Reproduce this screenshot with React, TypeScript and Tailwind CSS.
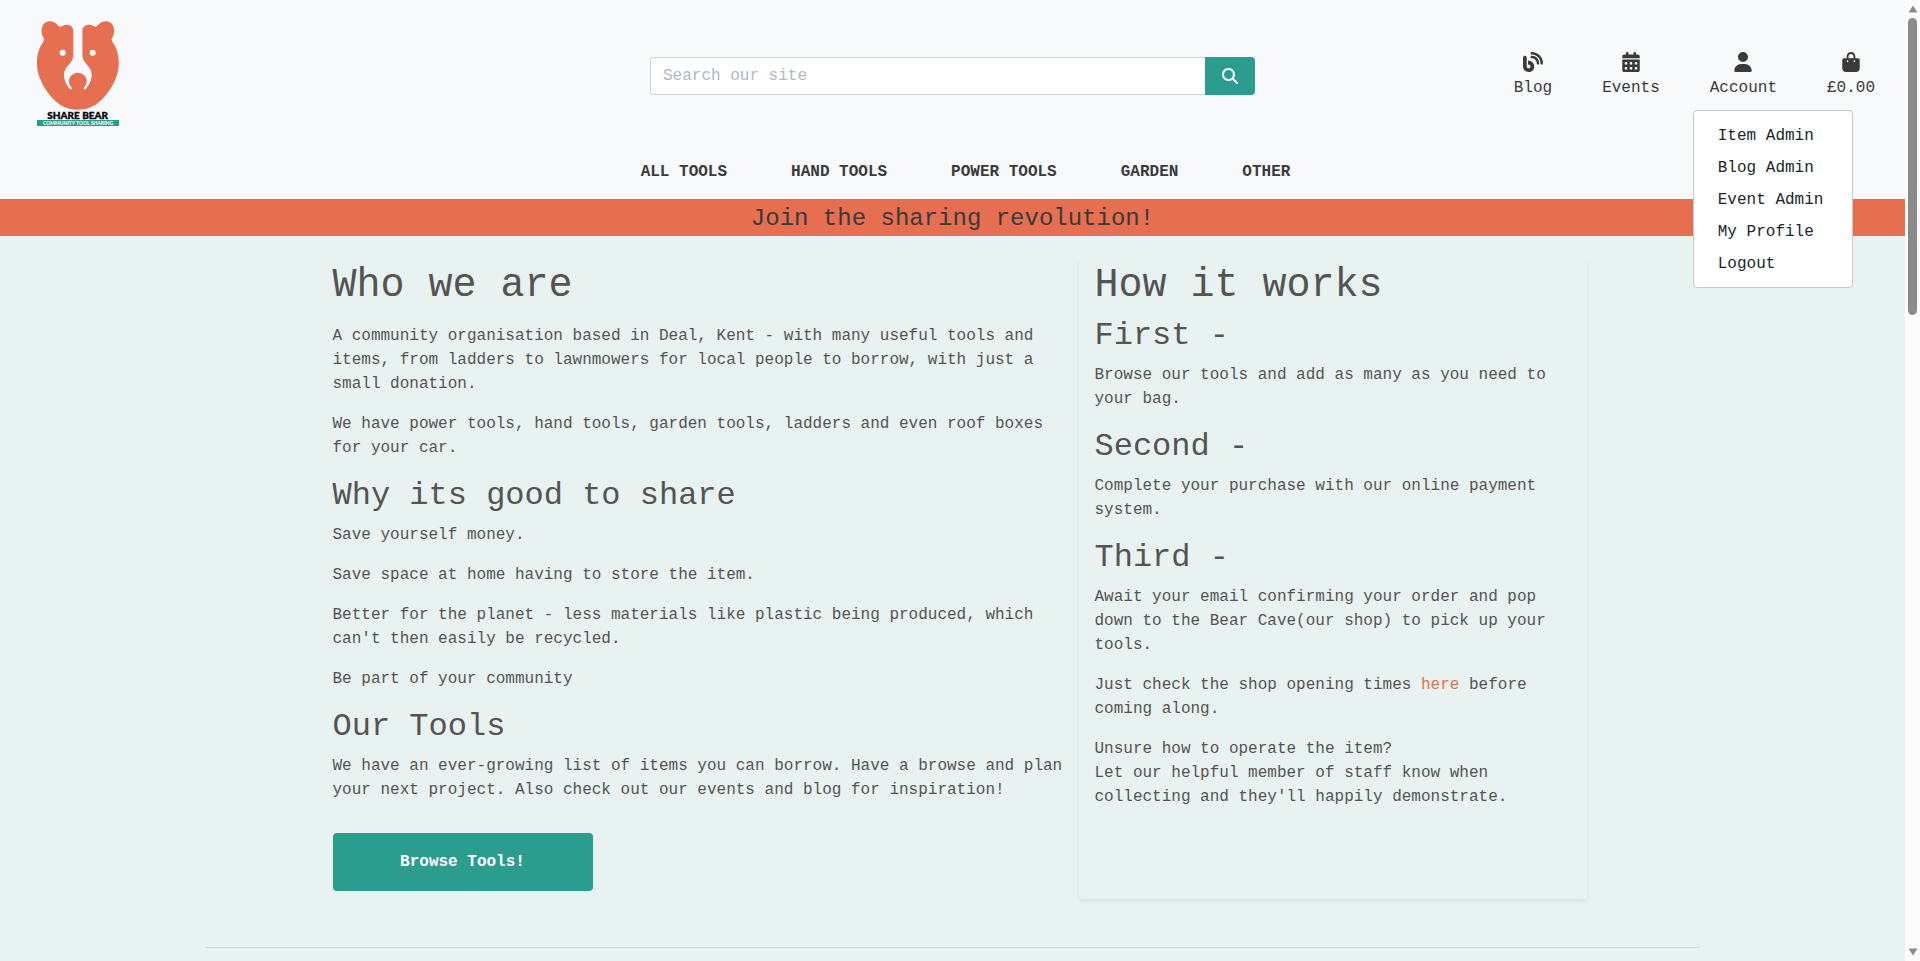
import type { ReactNode } from "react";
import {
  FaBagShopping,
  FaBlog,
  FaCalendarDays,
  FaMagnifyingGlass,
  FaUser,
} from "react-icons/fa6";

const categories = ["ALL TOOLS", "HAND TOOLS", "POWER TOOLS", "GARDEN", "OTHER"];
const accountLinks = ["Item Admin", "Blog Admin", "Event Admin", "My Profile", "Logout"];

function Logo() {
  return (
    <svg viewBox="50 30 246 318" className="h-[106px] w-[82px]" role="img" aria-label="Share Bear">
      <path
        fill="#e76f51"
        d="M159 64V134C159 162 131 166 131 194C131 212 140 226 148 236C151 239 156 238 155 234C150 228 146 222 146 212C146 199 159 188 172.500 188C186 188 199 199 199 212C199 222 195 228 190 234C189 238 194 239 197 236C205 226 214 212 214 194C214 166 186 162 186 134V64C186 46 203 40 219 48C225 52 229 50 233 45C243 32 261 30 272 39C284 50 284 72 275 84C272 89 276 94 279 100C300 130 300 178 284 210C271 242 249 268 226 284C208 295 190 299 172.500 299C155 299 137 295 119 284C96 268 74 242 61 210C45 178 45 130 66 100C69 94 73 89 70 84C61 72 61 50 73 39C84 30 102 32 112 45C116 50 120 52 126 48C142 40 159 46 159 64Z"
      />
      <circle cx="127" cy="128" r="9" fill="#ffffff" />
      <circle cx="217" cy="128" r="9" fill="#ffffff" />
      <text
        x="172"
        y="327"
        textAnchor="middle"
        fill="#000000"
        stroke="#000000"
        strokeWidth="1"
        className="font-['Lato',sans-serif] text-[30px] font-black"
      >
        SHARE BEAR
      </text>
      <rect x="50" y="330" width="246" height="18" fill="#2a9d8f" />
      <text
        x="173"
        y="344"
        textAnchor="middle"
        fill="#ffffff"
        className="font-['Lato',sans-serif] text-[15px] font-black"
      >
        COMMUNITY TOOL SHARING
      </text>
    </svg>
  );
}

function IconLink({ icon, label }: { icon: ReactNode; label: string }) {
  return (
    <a href="#" className="flex flex-col items-center gap-1">
      <span className="text-[20px]">{icon}</span>
      <span>{label}</span>
    </a>
  );
}

function Header() {
  return (
    <header className="bg-[#f8f9fb] pt-5 pb-[15px] text-[#3a3a3a]">
      <div className="grid grid-cols-3 items-center">
        <a href="#" className="ml-[37px] w-fit pb-1.5">
          <Logo />
        </a>
        <form className="mx-[15px] flex h-[38px]" onSubmit={(e) => e.preventDefault()}>
          <input
            type="text"
            aria-label="Search our site"
            placeholder="Search our site"
            className="min-w-0 flex-1 rounded-l border border-r-0 border-[#ced4d6] bg-white px-3 outline-none placeholder:text-[#adb9c4]"
          />
          <button
            type="submit"
            aria-label="Search"
            className="flex w-[50px] items-center justify-center rounded-r bg-[#2a9d8f] text-white"
          >
            <FaMagnifyingGlass />
          </button>
        </form>
        <div className="flex justify-end gap-[50px] pr-[30px]">
          <IconLink icon={<FaBlog />} label="Blog" />
          <IconLink icon={<FaCalendarDays />} label="Events" />
          <div className="relative">
            <IconLink icon={<FaUser />} label="Account" />
            <ul className="absolute top-full -left-[17px] z-10 mt-2.5 w-40 rounded border border-[#c8c8c8] bg-white pt-[9px] pb-[7px] text-[#212529]">
              {accountLinks.map((label) => (
                <li key={label}>
                  <a href="#" className="block px-6 py-1 whitespace-nowrap">
                    {label}
                  </a>
                </li>
              ))}
            </ul>
          </div>
          <IconLink icon={<FaBagShopping />} label="£0.00" />
        </div>
      </div>
      <nav className="mt-7 flex justify-center gap-16 pl-[26px] font-bold">
        {categories.map((label) => (
          <a key={label} href="#">
            {label}
          </a>
        ))}
      </nav>
    </header>
  );
}

function SubHeading({ children }: { children: ReactNode }) {
  return <h2 className="mb-2 text-[32px] leading-[39px]">{children}</h2>;
}

function Paragraph({ children }: { children: ReactNode }) {
  return <p className="mb-4">{children}</p>;
}

function Scrollbar() {
  return (
    <div aria-hidden="true" className="flex w-[15px] shrink-0 flex-col items-center bg-[#fcfcfc] py-[5px]">
      <svg viewBox="0 0 10 8" className="h-2 w-2.5 shrink-0">
        <path d="M5 0.500L9.500 7.500H0.500Z" fill="#8b8b8b" />
      </svg>
      <div className="mt-[5px] h-[297px] w-[9px] rounded-full bg-[#8b8b8b]" />
      <svg viewBox="0 0 10 8" className="mt-auto h-2 w-2.5 shrink-0">
        <path d="M5 7.500L0.500 0.500H9.500Z" fill="#8b8b8b" />
      </svg>
    </div>
  );
}

export default function App() {
  return (
    <div className="flex h-screen overflow-hidden bg-[#e8f2f0] font-['Liberation_Mono',monospace] text-[16px] leading-6">
      <div className="min-w-0 flex-1 overflow-hidden">
        <Header />
        <p className="bg-[#e76f51] px-1 pt-[5px] pb-[3px] text-center text-[24px] leading-[29px] text-[#3a3a3a]">
          Join the sharing revolution!
        </p>
        <main className="pt-6 text-[#545454]">
          <div className="mx-auto grid w-2/3 grid-cols-[3fr_2fr]">
            <section className="px-[15px] pb-2">
              <h1 className="mb-3 text-[40px] leading-[52px]">Who we are</h1>
              <Paragraph>
                A community organisation based in Deal, Kent - with many useful tools and items, from ladders to
                lawnmowers for local people to borrow, with just a small donation.
              </Paragraph>
              <Paragraph>
                We have power tools, hand tools, garden tools, ladders and even roof boxes for your car.
              </Paragraph>
              <SubHeading>Why its good to share</SubHeading>
              <Paragraph>Save yourself money.</Paragraph>
              <Paragraph>Save space at home having to store the item.</Paragraph>
              <Paragraph>
                Better for the planet - less materials like plastic being produced, which can't then easily be
                recycled.
              </Paragraph>
              <Paragraph>Be part of your community</Paragraph>
              <SubHeading>Our Tools</SubHeading>
              <Paragraph>
                We have an ever-growing list of items you can borrow. Have a browse and plan your next project. Also
                check out our events and blog for inspiration!
              </Paragraph>
              <a
                href="#"
                className="mt-[31px] flex h-[58px] w-[260px] items-center justify-center rounded bg-[#2a9d8f] font-bold text-white"
              >
                Browse Tools!
              </a>
            </section>
            <section className="px-[15px] shadow-[0_2px_4px_rgba(0,0,0,0.075)]">
              <h1 className="mb-1 text-[40px] leading-[52px]">How it works</h1>
              <SubHeading>First -</SubHeading>
              <Paragraph>Browse our tools and add as many as you need to your bag.</Paragraph>
              <SubHeading>Second -</SubHeading>
              <Paragraph>Complete your purchase with our online payment system.</Paragraph>
              <SubHeading>Third -</SubHeading>
              <Paragraph>
                Await your email confirming your order and pop down to the Bear Cave(our shop) to pick up your tools.
              </Paragraph>
              <Paragraph>
                Just check the shop opening times{" "}
                <a href="#" className="text-[#e76f51]">
                  here
                </a>{" "}
                before coming along.
              </Paragraph>
              <Paragraph>
                Unsure how to operate the item?
                <br />
                Let our helpful member of staff know when collecting and they'll happily demonstrate.
              </Paragraph>
            </section>
          </div>
          <div className="mx-auto mt-12 w-4/5 px-[15px] pb-12">
            <hr className="border-[#d0d9d8]" />
          </div>
        </main>
      </div>
      <Scrollbar />
    </div>
  );
}
